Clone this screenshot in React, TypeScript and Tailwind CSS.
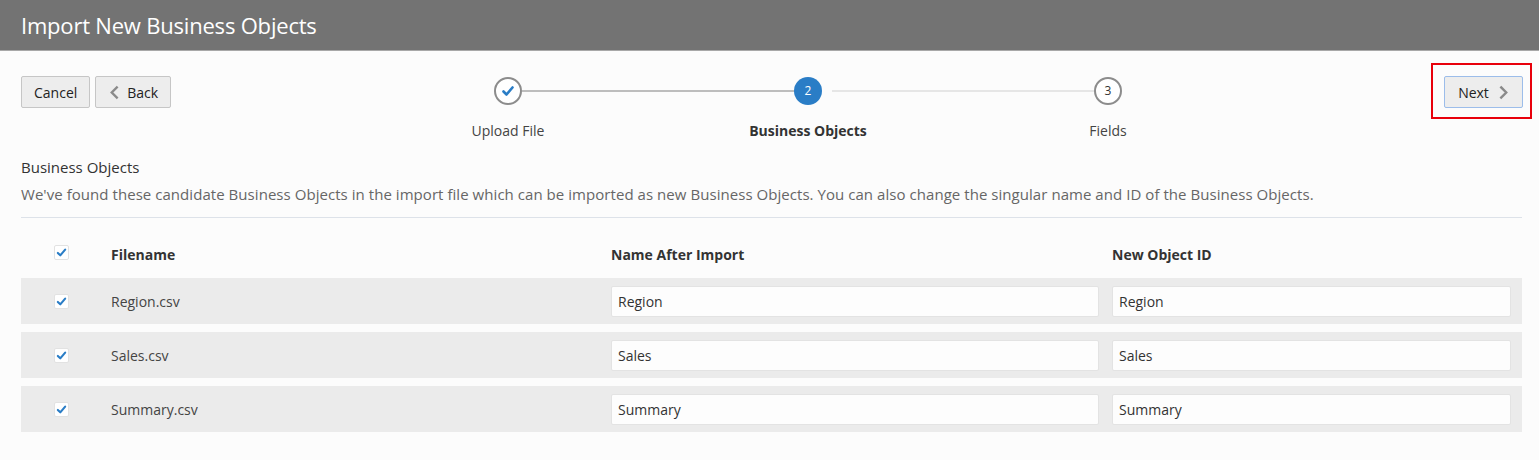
const rows = [
  { file: 'Region.csv', name: 'Region', id: 'Region' },
  { file: 'Sales.csv', name: 'Sales', id: 'Sales' },
  { file: 'Summary.csv', name: 'Summary', id: 'Summary' },
];

const steps = [
  { label: 'Upload File', state: 'done' },
  { label: 'Business Objects', state: 'current' },
  { label: 'Fields', state: 'todo' },
];

const Check = ({ className }: { className?: string }) => (
  <svg viewBox="0 0 16 16" className={className} fill="none" stroke="currentColor" strokeWidth="2.6" strokeLinecap="round" strokeLinejoin="round">
    <path d="M3.5 8.5l3 3 6-7" />
  </svg>
);

const Chevron = ({ dir }: { dir: 'left' | 'right' }) => (
  <svg viewBox="0 0 12 16" className="w-[11px] h-[15px] text-[#8a8a8a]" fill="none" stroke="currentColor" strokeWidth="2.6" strokeLinecap="square">
    {dir === 'left' ? <path d="M8.5 2.5L3 8l5.5 5.5" /> : <path d="M3.5 2.5L9 8l-5.5 5.5" />}
  </svg>
);

const CheckBox = () => (
  <div className="w-[15px] h-[15px] bg-white border border-[#e2e2e2] rounded-[2px] flex items-center justify-center">
    <Check className="w-[13px] h-[13px] text-[#2a7dc6]" />
  </div>
);

// three 300px columns, circles sit at each column's centre
const Stepper = () => (
  <div className="flex flex-col w-[900px]">
    <div className="flex items-center h-[32px] px-[136px]">
      <div className="w-[28px] h-[28px] rounded-full border-2 border-[#8c8c8c] bg-white flex items-center justify-center">
        <Check className="w-[16px] h-[16px] text-[#2a7dc6]" />
      </div>
      <div className="w-[272px] h-[2px] bg-[#bdbdbd]" />
      <div className="w-[28px] h-[28px] rounded-full bg-[#2a7dc6] text-white text-[12px] flex items-center justify-center">2</div>
      <div className="flex-1 h-[2px] bg-[#e6e6e6] ml-[10px]" />
      <div className="w-[28px] h-[28px] rounded-full border-2 border-[#8c8c8c] bg-white text-[#333] text-[12px] flex items-center justify-center">3</div>
    </div>
    <div className="grid grid-cols-3 mt-[13px] text-[14px] text-[#444]">
      {steps.map((s, i) => (
        <div key={i} className={`text-center ${s.state === 'current' ? 'font-bold text-[#333]' : ''}`}>
          {s.label}
        </div>
      ))}
    </div>
  </div>
);

export default function App() {
  return (
    <div className="min-h-[460px] bg-[#fcfcfc] text-[#333]" style={{ fontFamily: '"Open Sans", "Noto Sans", sans-serif' }}>
      <div className="h-[51px] bg-[#737373] border-b border-[#a8a8a8] flex items-center px-[21px]">
        <h1 className="text-[22px] text-white font-normal tracking-[-0.2px]">Import New Business Objects</h1>
      </div>

      <div className="pl-[21px] pr-[17px]">
        <div className="flex items-start pt-[25px]">
          <div className="flex gap-[5px] w-[337px]">
            <button className="h-[32px] px-[12px] bg-[#ededed] border border-[#c6c6c6] rounded-[2px] text-[14px] text-[#222]">Cancel</button>
            <button className="h-[32px] pl-[13px] pr-[12px] bg-[#ededed] border border-[#c6c6c6] rounded-[2px] text-[14px] text-[#222] flex items-center gap-[7px]">
              <Chevron dir="left" />
              Back
            </button>
          </div>
          <div className="-mt-[1px]">
            <Stepper />
          </div>
          <div className="flex-1 flex justify-end -mt-[13px] -mr-[10px]">
            <div className="border-2 border-[#e8000b] pl-[11px] pr-[7px] pt-[11px] pb-[9px]">
              <button className="h-[32px] w-[79px] bg-[#ededed] border border-[#9cbdea] rounded-[2px] text-[14px] text-[#222] flex items-center justify-center gap-[9px]">
                Next
                <Chevron dir="right" />
              </button>
            </div>
          </div>
        </div>

        <div className="mt-[15px] text-[15px] text-[#333]">Business Objects</div>
        <div className="mt-[4px] text-[15px] text-[#666] pb-[12px] border-b border-[#dde2e9] tracking-[0.05px]">
          We've found these candidate Business Objects in the import file which can be imported as new Business Objects. You can also change the singular name and ID of the Business Objects.
        </div>

        <div className="grid grid-cols-[90px_500px_501px_1fr] pr-[11px] items-start h-[60px] pt-[26px] text-[14px] font-bold text-[#333]">
          <div className="pl-[33px] pt-[1px]"><CheckBox /></div>
          <div>Filename</div>
          <div>Name After Import</div>
          <div>New Object ID</div>
        </div>

        <div className="flex flex-col gap-[8px]">
          {rows.map(r => (
            <div key={r.file} className="grid grid-cols-[90px_500px_501px_1fr] pr-[11px] items-center h-[46px] bg-[#ebebeb] text-[14px]">
              <div className="pl-[33px]"><CheckBox /></div>
              <div className="text-[#444]">{r.file}</div>
              <div>
                <input readOnly value={r.name} className="w-[488px] h-[31px] px-[6px] bg-[#fdfdfd] border border-[#e3e3e3] rounded-[2px] text-[14px] text-[#333] outline-none" />
              </div>
              <div>
                <input readOnly value={r.id} className="w-full h-[31px] px-[6px] bg-[#fdfdfd] border border-[#e3e3e3] rounded-[2px] text-[14px] text-[#333] outline-none" />
              </div>
            </div>
          ))}
        </div>
      </div>
    </div>
  );
}
